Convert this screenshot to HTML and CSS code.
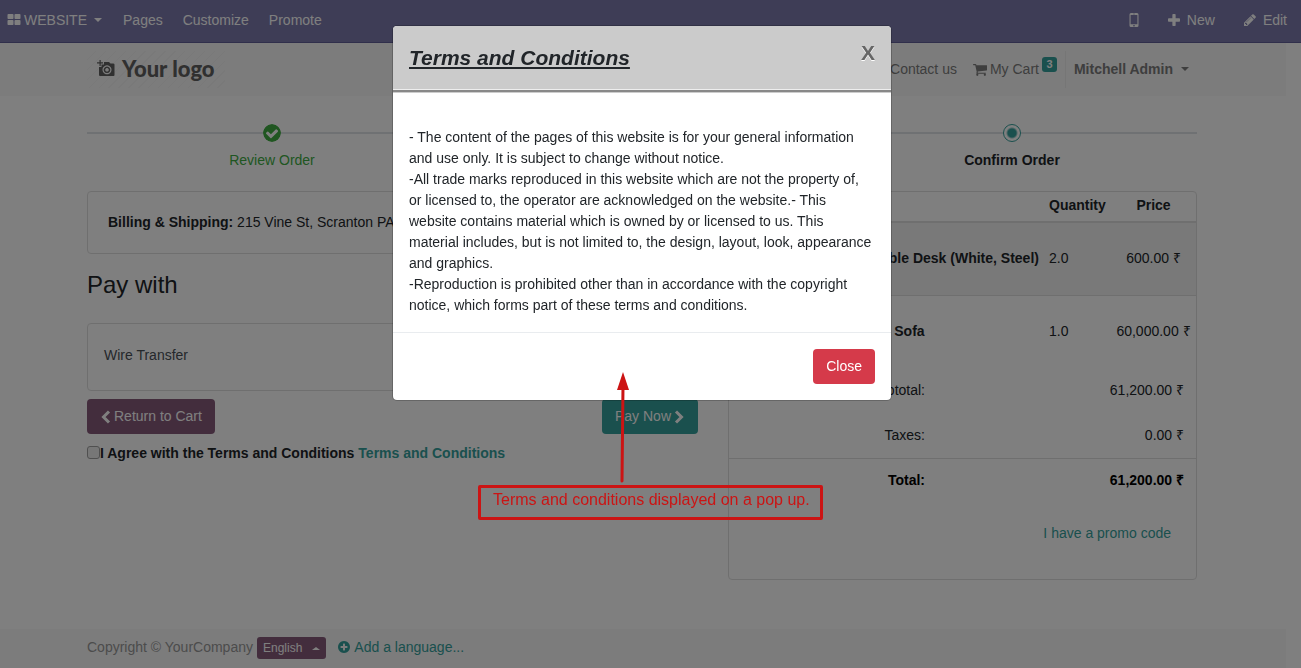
FILE: index.html
```html
<!DOCTYPE html>
<html lang="en">
<head>
<meta charset="utf-8">
<meta name="viewport" content="width=device-width, initial-scale=1">
<title>Confirm Order</title>
<link rel="stylesheet" href="styles.css">
</head>
<body>
<svg class="sprite" aria-hidden="true">
  <symbol id="i-tiles" viewBox="0 0 1792 1792"><path d="M832 1024v384q0 52-38 90t-90 38h-512q-52 0-90-38t-38-90v-384q0-52 38-90t90-38h512q52 0 90 38t38 90zm0-768v384q0 52-38 90t-90 38h-512q-52 0-90-38t-38-90v-384q0-52 38-90t90-38h512q52 0 90 38t38 90zm896 768v384q0 52-38 90t-90 38h-512q-52 0-90-38t-38-90v-384q0-52 38-90t90-38h512q52 0 90 38t38 90zm0-768v384q0 52-38 90t-90 38h-512q-52 0-90-38t-38-90v-384q0-52 38-90t90-38h512q52 0 90 38t38 90z"/></symbol>
  <symbol id="i-check" viewBox="128 128 1536 1536"><path d="M1412 734q0-28-18-46l-91-90q-19-19-45-19t-45 19l-408 407-226-226q-19-19-45-19t-45 19l-91 90q-18 18-18 46 0 27 18 45l362 362q19 19 45 19 27 0 46-19l543-543q18-18 18-45zm252 162q0 209-103 385.500t-279.500 279.500-385.500 103-385.500-103-279.500-279.500-103-385.500 103-385.500 279.500-279.500 385.500-103 385.500 103 279.500 279.500 103 385.500z"/></symbol>
  <symbol id="i-plus-circle" viewBox="128 128 1536 1536"><path d="M1344 960v-128q0-26-19-45t-45-19h-256v-256q0-26-19-45t-45-19h-128q-26 0-45 19t-19 45v256h-256q-26 0-45 19t-19 45v128q0 26 19 45t45 19h256v256q0 26 19 45t45 19h128q26 0 45-19t19-45v-256h256q26 0 45-19t19-45zm320-64q0 209-103 385.500t-279.500 279.500-385.500 103-385.500-103-279.500-279.500-103-385.500 103-385.500 279.500-279.500 385.500-103 385.500 103 279.500 279.500 103 385.500z"/></symbol>
  <symbol id="i-pencil" viewBox="128 128 1536 1536"><path d="M491 1536l91-91-235-235-91 91v107h128v128h107zm523-928q0-22-22-22-10 0-17 7l-542 542q-7 7-7 17 0 22 22 22 10 0 17-7l542-542q7-7 7-17zm-54-192l416 416-832 832h-416v-416zm683 96q0 53-37 90l-166 166-416-416 166-165q36-38 90-38 53 0 91 38l235 234q37 39 37 91z"/></symbol>
  <symbol id="i-cart" viewBox="64 128 1664 1664"><path d="M704 1536q0 52-38 90t-90 38-90-38-38-90 38-90 90-38 90 38 38 90zm896 0q0 52-38 90t-90 38-90-38-38-90 38-90 90-38 90 38 38 90zm128-1088v512q0 24-16.500 42.500t-40.500 21.500l-1044 122q13 60 13 70 0 16-24 64h920q26 0 45 19t19 45-19 45-45 19h-1024q-26 0-45-19t-19-45q0-11 8-31.500t16-36 21.500-40 15.500-29.500l-177-823h-204q-26 0-45-19t-19-45 19-45 45-19h256q16 0 28.500 6.500t19.500 15.500 13 24.500 8 26 5.500 29.500 4.500 26h1201q26 0 45 19t19 45z"/></symbol>
  <symbol id="i-plus" viewBox="192 128 1408 1408"><path d="M1600 736v192q0 40-28 68t-68 28h-416v416q0 40-28 68t-68 28h-192q-40 0-68-28t-28-68v-416h-416q-40 0-68-28t-28-68v-192q0-40 28-68t68-28h416v-416q0-40 28-68t68-28h192q40 0 68 28t28 68v416h416q40 0 68 28t28 68z"/></symbol>
  <symbol id="i-mobile" viewBox="0 0 10 16"><path fill-rule="evenodd" d="M2 1h6q1.500 0 1.500 1.500v11q0 1.500-1.500 1.500h-6q-1.500 0-1.500-1.500v-11q0-1.500 1.500-1.500zM1.600 3v9.300h6.800v-9.300zM4 1.700v.5h2v-.5zM5 12.900a.8.800 0 1 0 .01 0z"/></symbol>
  <symbol id="i-left" viewBox="0 0 10 14"><path d="M8.500 1.500L3 7l5.500 5.500" fill="none" stroke="currentColor" stroke-width="3"/></symbol>
  <symbol id="i-right" viewBox="0 0 10 14"><path d="M1.500 1.500L7 7l-5.500 5.500" fill="none" stroke="currentColor" stroke-width="3"/></symbol>
  <symbol id="i-camera" viewBox="0 0 18 17"><path fill-rule="evenodd" d="M2.500 0h1.200v2.300h2.300v1.200h-2.300v2.500h-1.200v-2.500h-2.500v-1.200h2.500zM7 2h5l1.500 1.500h2.500q1.500 0 1.500 1v10.500q0 1-1 1h-13.500q-1 0-1-1v-8h2.500v-2.500h2.500zM10 5.300a4.500 4.500 0 1 0 .01 0zM10 6.500a3.300 3.300 0 1 1-.01 0zM10 8a1.800 1.800 0 1 0 .01 0z"/></symbol>
</svg>

<nav class="topbar">
  <a class="brand" href="#"><svg class="icon"><use href="#i-tiles"/></svg>WEBSITE<span class="caret"></span></a>
  <a href="#">Pages</a>
  <a href="#">Customize</a>
  <a href="#">Promote</a>
  <div class="topbar-tools">
    <a href="#" aria-label="Mobile preview"><svg class="icon-mobile"><use href="#i-mobile"/></svg></a>
    <a class="tool" href="#"><svg class="icon-small"><use href="#i-plus"/></svg>New</a>
    <a class="tool" href="#"><svg class="icon-small"><use href="#i-pencil"/></svg>Edit</a>
  </div>
</nav>

<div class="page">
  <header class="site-header">
    <div class="container header-row">
      <a class="logo" href="#"><svg class="logo-icon"><use href="#i-camera"/></svg>Your logo</a>
      <nav class="site-nav">
        <a href="#">Home</a>
        <a href="#">Shop</a>
        <a href="#">Contact us</a>
        <a class="cart" href="#"><svg class="icon"><use href="#i-cart"/></svg>My Cart<span class="badge">3</span></a>
        <a class="user" href="#">Mitchell Admin<span class="caret"></span></a>
      </nav>
    </div>
  </header>

  <main class="container">
    <ol class="wizard">
      <li class="done"><svg class="dot"><use href="#i-check"/></svg>Review Order</li>
      <li class="done"><svg class="dot"><use href="#i-check"/></svg>Address</li>
      <li class="current"><span class="dot"></span>Confirm Order</li>
    </ol>

    <div class="columns">
      <section>
        <div class="card billing"><b>Billing &amp; Shipping:</b> 215 Vine St, Scranton PA 18503</div>
        <h3>Pay with</h3>
        <div class="card method">Wire Transfer</div>
        <div class="actions">
          <button class="btn btn-primary" type="button"><svg class="chevron"><use href="#i-left"/></svg>Return to Cart</button>
          <button class="btn btn-teal" type="button">Pay Now<svg class="chevron"><use href="#i-right"/></svg></button>
        </div>
        <div class="agree"><input type="checkbox" id="agree"><label for="agree">I Agree with the Terms and Conditions</label><a href="#">Terms and Conditions</a></div>
      </section>

      <section class="card summary">
        <table class="items">
          <thead><tr><th class="thumb"></th><th>Product</th><th class="qty">Quantity</th><th class="price">Price</th></tr></thead>
          <tbody>
            <tr class="shaded"><td></td><td><b>Customizable Desk (White, Steel)</b></td><td>2.0</td><td class="price">600.00 ₹</td></tr>
            <tr><td></td><td><b>Three-Seat Sofa</b></td><td>1.0</td><td class="price">60,000.00 ₹</td></tr>
          </tbody>
        </table>
        <table class="totals">
          <tbody>
            <tr><td class="label">Subtotal:</td><td>61,200.00 ₹</td></tr>
            <tr><td class="label">Taxes:</td><td>0.00 ₹</td></tr>
            <tr class="total"><td class="label">Total:</td><td>61,200.00 ₹</td></tr>
          </tbody>
        </table>
        <a class="promo" href="#">I have a promo code</a>
      </section>
    </div>
  </main>

  <footer class="site-footer">
    <div class="container footer-row">
      <span>Copyright © YourCompany</span>
      <button class="lang" type="button">English<span class="caret up"></span></button>
      <a href="#"><svg class="icon-small"><use href="#i-plus-circle"/></svg>Add a language...</a>
    </div>
  </footer>
</div>

<div class="backdrop">
  <div class="modal" role="dialog" aria-labelledby="modal-title">
    <div class="modal-header">
      <h4 id="modal-title">Terms and Conditions</h4>
      <button class="close" type="button">X</button>
    </div>
    <div class="modal-body">
      - The content of the pages of this website is for your general information and use only. It is subject to change without notice.<br>
      -All trade marks reproduced in this website which are not the property of, or licensed to, the operator are acknowledged on the website.- This website contains material which is owned by or licensed to us. This material includes, but is not limited to, the design, layout, look, appearance and graphics.<br>
      -Reproduction is prohibited other than in accordance with the copyright notice, which forms part of these terms and conditions.
    </div>
    <div class="modal-footer"><button class="btn btn-danger" type="button">Close</button></div>
  </div>
</div>

<svg class="arrow" viewBox="0 0 14 112" aria-hidden="true"><path d="M7 14L6 109" stroke="#cc1414" stroke-width="3" stroke-linecap="round"/><path d="M7 0l6 18h-12z" fill="#cc1414"/></svg>
<div class="note">Terms and conditions displayed on a pop up.</div>
</body>
</html>
```
FILE: styles.css
```css
* { box-sizing: border-box; }

body {
  margin: 0;
  min-height: 100vh;
  display: flex;
  flex-direction: column;
  background: #fff;
  color: #212529;
  font: 14px/21px "Liberation Sans", Arial, sans-serif;
}

a { color: #35a09c; text-decoration: none; }
svg { fill: currentColor; flex: none; }
button { font: inherit; }

.sprite { position: absolute; width: 0; height: 0; }
.icon { width: 14px; height: 14px; }
.icon-small { width: 12px; height: 12px; }
.icon-mobile { display: block; width: 10px; height: 16px; }

.caret {
  display: inline-block;
  border: 4px solid transparent;
  border-top-color: currentColor;
  border-bottom: 0;
}
.caret.up {
  border-top: 0;
  border-bottom: 3px solid currentColor;
}

.topbar {
  display: flex;
  align-items: center;
  gap: 20px;
  height: 43px;
  padding: 0 14px 2px 7px;
  background: #7c7bad;
  border-bottom: 1px solid #605f96;
}
.topbar a { color: #fff; }
.topbar .brand { display: flex; align-items: center; gap: 3px; }
.brand .caret { margin: 0 1px 0 4px; }
.topbar-tools { display: flex; align-items: center; gap: 29px; margin-left: auto; }
.tool { display: flex; align-items: center; gap: 7px; }

.page {
  flex: 1;
  display: flex;
  flex-direction: column;
  margin-right: 15px;
}
.container { width: 100%; max-width: 1140px; margin: 0 auto; padding: 0 16px 0 14px; }

.site-header { background: #f8f8f8; }
.header-row { display: flex; align-items: center; height: 53px; }
.logo {
  display: flex;
  align-items: center;
  gap: 7px;
  height: 37px;
  padding: 0 10px 2px;
  color: #606060;
  font: 900 22px/24px Lato, sans-serif;
  background: repeating-linear-gradient(135deg, transparent 0 6px, #f2f2f2 6px 7px);
}
.logo-icon { width: 18px; height: 17px; }
.site-nav { display: flex; align-items: center; margin-left: auto; }
.site-nav a { padding: 8px; color: #7c7c7c; }
.site-nav .cart { display: flex; align-items: center; gap: 3px; padding: 8px; }
.badge {
  align-self: flex-start;
  margin-top: -2px;
  width: 15px;
  height: 15px;
  margin-bottom: -2px;
  border-radius: 3px;
  background: #35a09c;
  color: #fff;
  font: bold 11px/15px "Liberation Sans", Arial, sans-serif;
  text-align: center;
}
.site-nav .user { border-left: 1px solid #ececec; font-weight: bold; }
.user .caret { margin: 0 0 3px 8px; }

.wizard {
  display: grid;
  grid-template-columns: repeat(3, 1fr);
  margin: 28px 0 20px;
  padding: 0;
  list-style: none;
  text-align: center;
  background: linear-gradient(#dee2e6, #dee2e6) 0 8px / 100% 2px no-repeat;
}
.wizard li { display: flex; flex-direction: column; align-items: center; gap: 8px; }
.wizard .dot { width: 18px; height: 18px; border-radius: 50%; background: #fff; }
.wizard .done { color: #40ad43; }
.wizard .current { font-weight: bold; }
.wizard .current .dot { border: 1px solid #35a09c; background: radial-gradient(#35a09c 0 4px, #fff 6px); }

.columns { display: grid; grid-template-columns: 611fr 469fr; gap: 30px; }
.card { border: 1px solid #dfdfdf; border-radius: 4px; }
.billing { padding: 20px; }
h3 { margin: 16px 0 24px; font-size: 24px; line-height: 29px; font-weight: normal; }
.method { padding: 21px 16px 24px; color: #495057; }
.actions { display: flex; justify-content: space-between; margin: 8px 0 9px; }

.btn {
  display: flex;
  align-items: center;
  gap: 3px;
  height: 35px;
  padding: 0 13px;
  border: 0;
  border-radius: 4px;
  color: #fff;
}
.btn-primary { background: #875a7b; }
.btn-teal { background: #35a09c; }
.btn-danger { background: #d53a4a; }
.chevron { width: 11px; height: 14px; }

.agree { display: flex; align-items: center; font-weight: bold; }
.agree input {
  appearance: none;
  width: 13px;
  height: 13px;
  margin: 0 0 3px;
  border: 1px solid #a0a0a0;
  border-radius: 3px;
  background: #eee;
}
.agree a { margin-left: 4px; }

table { width: 100%; border-collapse: collapse; }
.items { table-layout: fixed; text-align: left; }
.items th { height: 30px; padding: 0 5px 2px; border-bottom: 2px solid #dfdfdf; }
.items td { height: 73px; padding: 0 5px; white-space: nowrap; }
.items .thumb { width: 84px; }
.items .qty { width: 67px; }
.items .price { width: 85px; text-align: center; padding-left: 0; padding-right: 0; }
.items .shaded { background: #f2f2f2; border-bottom: 1px solid #dfdfdf; }
.totals { text-align: right; }
.totals td { height: 45px; padding: 0 12px; }
.totals .label { width: 208px; }
.totals .total { border-top: 1px solid #dfdfdf; font-weight: bold; color: #000; }
.promo { display: block; padding: 20px 25px 35px; text-align: right; }

.site-footer { margin-top: auto; background: #f8f8f8; color: #999; }
.footer-row { display: flex; align-items: center; gap: 4px; height: 39px; padding-bottom: 3px; }
.lang {
  display: flex;
  align-items: center;
  gap: 10px;
  height: 22px;
  margin: 2px 8px 0 0;
  padding: 0 6px;
  border: 0;
  border-radius: 3px;
  background: #875a7b;
  color: #fff;
  font-size: 12px;
}
.footer-row a { display: flex; align-items: center; gap: 4px; }

.backdrop {
  position: fixed;
  inset: 0;
  padding: 25px 17px 0 0;
  background: rgba(0, 0, 0, .5);
}
.modal {
  max-width: 500px;
  margin: 0 auto;
  border: 1px solid rgba(0, 0, 0, .2);
  border-radius: 5px;
  background: #fff;
  background-clip: padding-box;
}
.modal-header {
  display: flex;
  justify-content: space-between;
  align-items: flex-start;
  padding: 16px;
  border-bottom: 1px solid #eee;
  border-radius: 4px 4px 0 0;
  background: #cbcbcb;
  box-shadow: 0 2px 0 #888, 0 3px 0 #ccc;
}
.modal h4 { margin: 0; font-size: 21px; line-height: 31px; font-style: italic; text-decoration: underline; }
.close {
  padding: 0;
  border: 0;
  background: none;
  color: #666;
  font-size: 21px;
  line-height: 22px;
  font-weight: bold;
  text-shadow: 0 1px 0 #fff;
}
.modal-body { padding: 37px 16px 16px; }
.modal-footer { display: flex; justify-content: flex-end; padding: 16px; border-top: 1px solid #e9ecef; }

.arrow { position: absolute; left: 616px; top: 372px; width: 14px; height: 112px; }
.note {
  position: absolute;
  left: 478px;
  top: 485px;
  height: 35px;
  padding: 1px 10px 0 12px;
  border: 3px solid #cc1414;
  border-radius: 2px;
  color: #cc1414;
  font-size: 16px;
  line-height: 21px;
}
```
